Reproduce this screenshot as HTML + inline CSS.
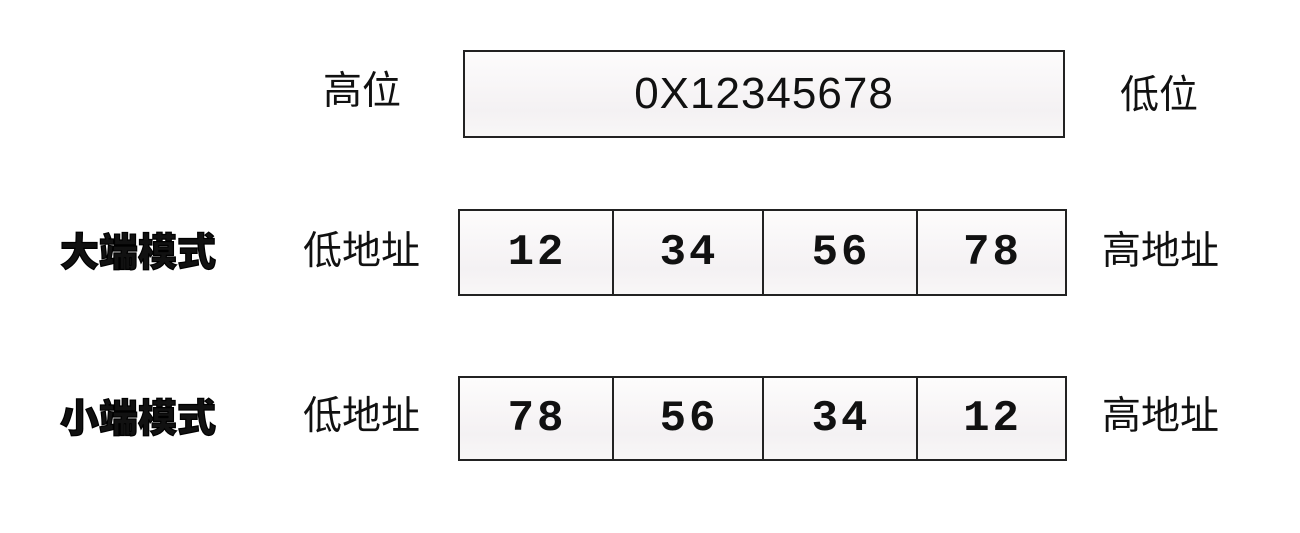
<!DOCTYPE html>
<html><head><meta charset="utf-8"><style>
body{margin:0;width:1300px;height:533px;background:#fff;position:relative;overflow:hidden;font-family:"Liberation Sans","Noto Sans CJK SC",sans-serif;color:#111}
.t{position:absolute;font-size:39px;line-height:40px;white-space:nowrap}
.b{font-weight:900;font-size:39px;-webkit-text-stroke:1.2px #000}
.box{position:absolute;border:2px solid #222;background:linear-gradient(#fdfcfc,#f4f1f3 70%,#f8f7f7);box-sizing:border-box}
.row{position:absolute;display:flex;border:2px solid #222;box-sizing:border-box}
.row div{flex:none;border-right:2px solid #222;box-sizing:border-box;display:flex;align-items:center;justify-content:center;font-family:"Liberation Mono",monospace;font-weight:bold;font-size:44px;letter-spacing:3px;padding-left:2px;background:linear-gradient(#fdfcfc,#f4f1f3 70%,#f8f7f7)}
.row div:last-child{border-right:none}
</style></head><body>
<div class="t" style="left:323px;top:72px">高位</div>
<div class="box" style="left:463px;top:50px;width:602px;height:88px;display:flex;align-items:center;justify-content:center;font-size:44px;letter-spacing:1px">0X12345678</div>
<div class="t" style="left:1120px;top:76px">低位</div>

<div class="t b" style="left:60px;top:234px">大端模式</div>
<div class="t" style="left:303px;top:232px">低地址</div>
<div class="row" style="left:458px;top:209px;width:609px;height:87px">
<div style="width:154px">12</div><div style="width:150px">34</div><div style="width:154px">56</div><div style="width:147px">78</div></div>
<div class="t" style="left:1102px;top:232px">高地址</div>

<div class="t b" style="left:60px;top:400px">小端模式</div>
<div class="t" style="left:303px;top:397px">低地址</div>
<div class="row" style="left:458px;top:376px;width:609px;height:85px">
<div style="width:154px">78</div><div style="width:150px">56</div><div style="width:154px">34</div><div style="width:147px">12</div></div>
<div class="t" style="left:1102px;top:397px">高地址</div>
</body></html>
